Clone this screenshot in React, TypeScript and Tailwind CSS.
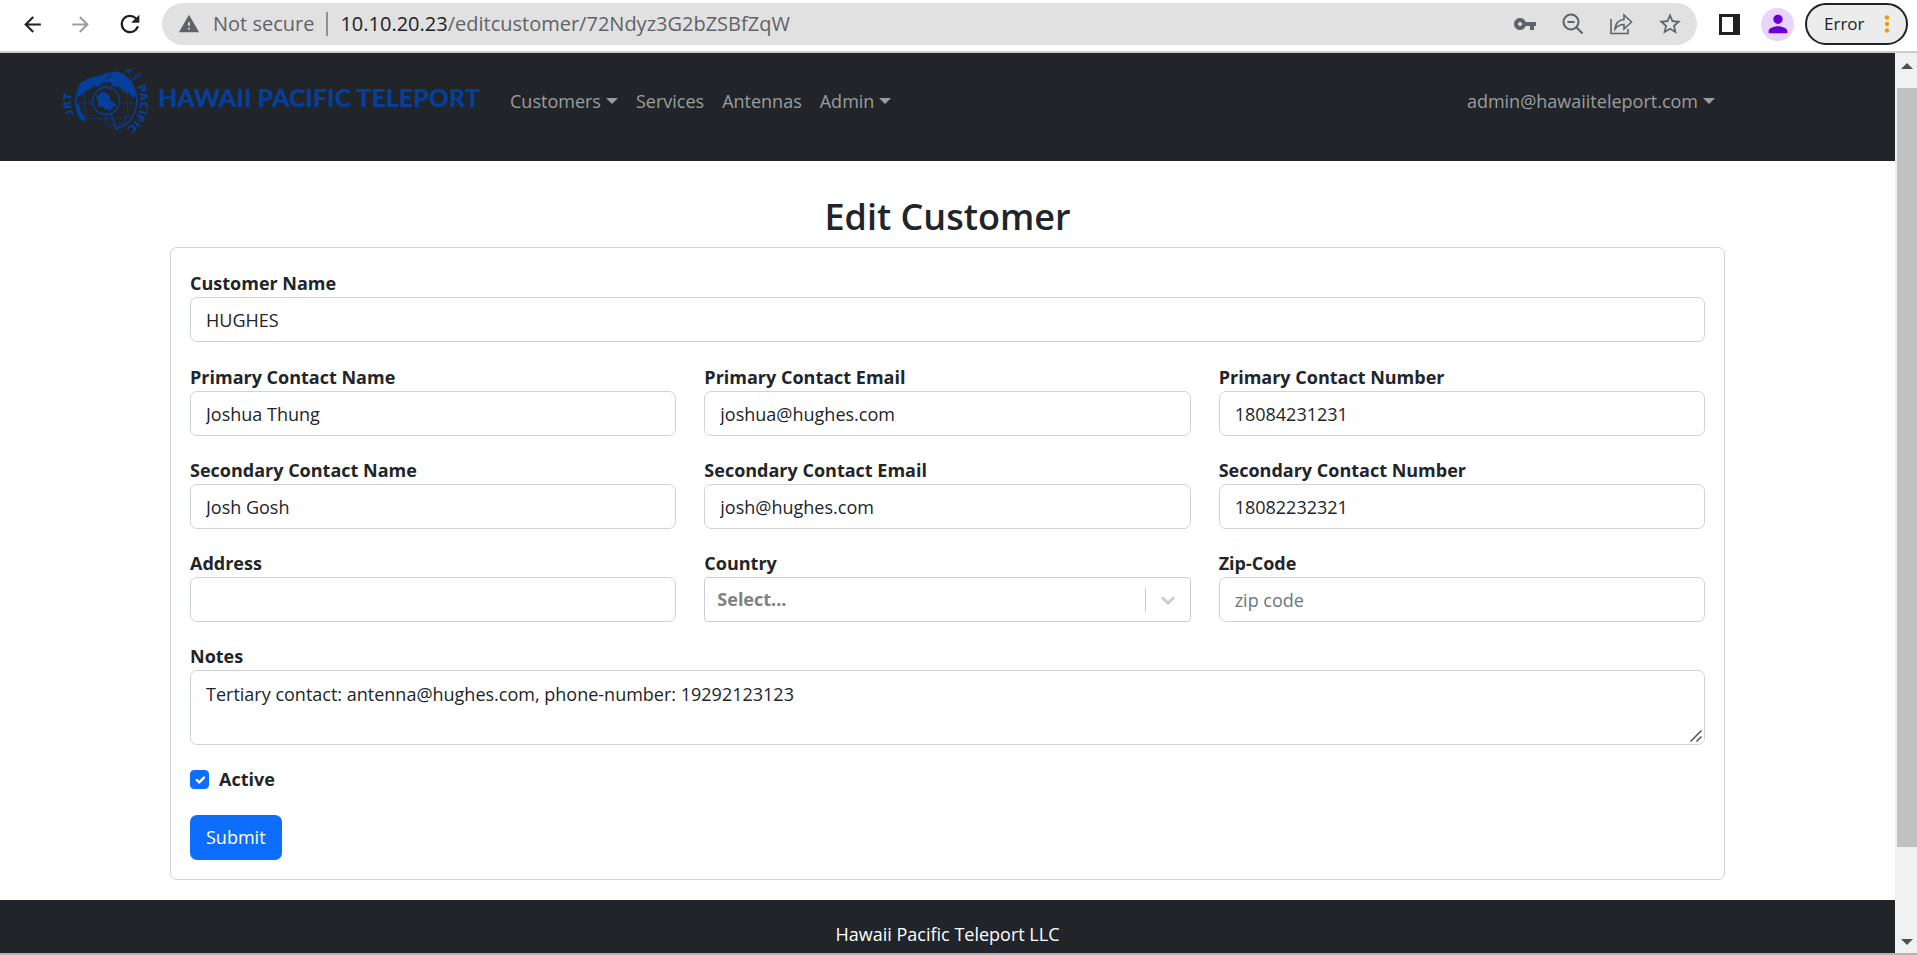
import { MdArrowBack, MdArrowForward, MdRefresh, MdWarning, MdVpnKey, MdStarBorder, MdPerson, MdMoreVert } from "react-icons/md";
import type { ReactNode } from "react";

const control =
  "h-[45px] w-full rounded-[7px] border border-[#ced4da] bg-white px-[15px] text-[18px] leading-[27px] text-[#212529] placeholder:text-[#6c757d] focus:outline-2 focus:outline-[#86b7fe]";

function Globe() {
  return (
    <svg viewBox="0 0 94 76" className="h-[76px] w-[94px] shrink-0 text-[#063f9b]" fill="none" stroke="currentColor" aria-hidden="true">
      <defs>
        <path id="ring" d="M46 73.5a34.5 34.5 0 0 1 0-69a34.5 34.5 0 0 1 0 69" />
        <clipPath id="ring-clip">
          <path d="M0 27h20v25H0zM62 5h32v67H62z" />
        </clipPath>
        <clipPath id="sphere">
          <path d="M22 20L42 14Q52 8 63 13C75 20 80 36 75 50Q70 63 56 67L22 58C14 48 14 32 22 20Z" />
        </clipPath>
      </defs>
      <path d="M42 14Q52 8 63 13C75 20 80 36 75 50Q70 63 56 67M22 58C14 48 14 32 22 20" strokeWidth="1.4" />
      <g clipPath="url(#sphere)" strokeWidth=".6">
        <path d="M14 41h64M15 53q31 8 60 0M16 28q30-8 60 0M22 61q26 8 44-2M32 14c-10 14-10 34-2 50M46 10v58M60 12c10 16 10 36 2 54" />
      </g>
      <g fill="currentColor" stroke="none">
        <path d="M22 20l8-4 12-3 6-2 2 3-4 2 1 4-5 1-4 3-5-1-2 4-4 1-4 4-6 3 1-8zM47 17l4-3-1-3 6-2 7 3 7 6 4 8 2 8-3 2-4-5-5-1-4-5-7-1-3-4-4 1zM16 41l3 2 2 7 4 5 0 5-4-3-4-7z" />
      </g>
      <circle cx="46" cy="39" r="13.5" fill="#212529" strokeWidth="1.3" />
      <path d="M36 34l3-1 2-3 4 0 3 3 2 1 0 4 3 2 4 4-4 1-3 4-5-2-4-3-3 1 0-6z" fill="currentColor" stroke="none" />
      <path d="M51 52l5 15 6-4M70 20l5-4M78 13.500l3-2M65.500 10.500l2-2.500 2 .500M68.500 11l3-4" strokeWidth="1.3" />
      <circle cx="76.500" cy="14.500" r="1.800" strokeWidth="1" />
      <g clipPath="url(#ring-clip)" fill="currentColor" stroke="none" className="font-['DejaVu_Sans',sans-serif] text-[11px] font-bold">
        <text>
          <textPath href="#ring" startOffset="37">ORT</textPath>
        </text>
        <text>
          <textPath href="#ring" startOffset="147">PACIFIC</textPath>
        </text>
      </g>
    </svg>
  );
}

function Caret() {
  return <span className="ml-[5px] inline-block border-x-[6px] border-t-[6px] border-x-transparent border-t-current align-[4px]" />;
}

function NavLink({ children, caret }: { children: ReactNode; caret?: boolean }) {
  return (
    <a href="#" className="hover:text-white">
      {children}
      {caret && <Caret />}
    </a>
  );
}

function Field({ id, label, children }: { id: string; label: string; children: ReactNode }) {
  return (
    <div className="flex min-w-0 flex-col">
      <label htmlFor={id} className="text-[18px] leading-[27px] font-bold">
        {label}
      </label>
      {children}
    </div>
  );
}

function TextField({ id, label, value, placeholder }: { id: string; label: string; value?: string; placeholder?: string }) {
  return (
    <Field id={id} label={label}>
      <input id={id} type="text" defaultValue={value} placeholder={placeholder} className={control} />
    </Field>
  );
}

function BrowserBar() {
  return (
    <header className="flex items-center border-b-2 border-[#cbcccd] bg-white pt-[3px] pr-[9px] pb-1.5 pl-5">
      <div className="flex shrink-0 items-center gap-[23px] pr-[18px] text-[#202124]">
        <button type="button" aria-label="Back"><MdArrowBack size={25} /></button>
        <button type="button" aria-label="Forward" className="text-[#9c9d9f]"><MdArrowForward size={25} /></button>
        <button type="button" aria-label="Reload"><MdRefresh size={28} /></button>
      </div>
      <div className="flex h-[42px] min-w-0 flex-1 items-center rounded-full bg-[#e1e1e1] pr-3.5 pl-4 text-[20px] text-[#5f6368]">
        <MdWarning size={22} className="shrink-0" />
        <span className="ml-[13px] shrink-0">Not secure</span>
        <span className="mx-3 h-6 w-0.5 shrink-0 bg-[#8f9194]" />
        <span className="min-w-0 flex-1 truncate">
          <span className="text-[#202124]">10.10.20.23</span>/editcustomer/72Ndyz3G2bZSBfZqW
        </span>
        <div className="flex shrink-0 items-center gap-6">
          <button type="button" aria-label="Passwords"><MdVpnKey size={24} /></button>
          <button type="button" aria-label="Zoom">
            <svg viewBox="0 0 24 24" className="size-6" fill="none" stroke="currentColor" strokeWidth="2">
              <circle cx="10" cy="10" r="7.5" />
              <path d="M15.5 15.5l6 6M6.5 10h7" />
            </svg>
          </button>
          <button type="button" aria-label="Share">
            <svg viewBox="0 0 24 24" className="size-6" fill="none" stroke="currentColor" strokeWidth="1.6">
              <path d="M2 7v14.5h17V17M6 17c.5-6 4-9 9-9.500V3l7.500 7-7.500 7v-4.500c-4 0-6.500 1-9 4.500z" />
            </svg>
          </button>
          <button type="button" aria-label="Bookmark"><MdStarBorder size={26} /></button>
        </div>
      </div>
      <button type="button" aria-label="Side panel" className="ml-[22px] h-[21px] w-[21px] shrink-0 border-[3px] border-r-[7px] border-[#202124] bg-white" />
      <button type="button" aria-label="Profile" className="ml-[21px] flex size-[33px] shrink-0 items-center justify-center rounded-full bg-[#e8d4fd] text-[#6a00d6]">
        <MdPerson size={28} />
      </button>
      <button type="button" className="ml-[11px] flex h-[42px] w-[103px] shrink-0 items-center justify-between rounded-full border-2 border-[#202124] bg-[#ececec] pr-1.5 pl-[17px] text-[17px] text-[#202124]">
        Error
        <MdMoreVert size={26} className="text-[#f29900]" />
      </button>
    </header>
  );
}

function NavBar() {
  return (
    <nav className="flex h-[108px] items-start bg-[#212529] pr-[180px] pl-[60px] text-[#9b9d9f]">
      <a href="#" className="flex items-start pt-[9px] font-[Lato] text-[25px] leading-[70px] font-black whitespace-nowrap text-[#063f9b]">
        <Globe />
        <span className="ml-1">HAWAII PACIFIC TELEPORT</span>
      </a>
      <div className="ml-[30px] flex flex-1 justify-between pt-[35px] text-[18px] leading-[27px] whitespace-nowrap">
        <div className="flex gap-[18px]">
          <NavLink caret>Customers</NavLink>
          <NavLink>Services</NavLink>
          <NavLink>Antennas</NavLink>
          <NavLink caret>Admin</NavLink>
        </div>
        <NavLink caret>admin@hawaiiteleport.com</NavLink>
      </div>
    </nav>
  );
}

function ScrollRail() {
  return (
    <div className="flex w-[22px] shrink-0 flex-col items-center bg-[#f1f1f1] pt-2.5 pb-2 pl-0.5" aria-hidden="true">
      <span className="border-x-[6px] border-b-[6px] border-x-transparent border-b-[#505050]" />
      <span className="mt-[19px] w-full flex-[759] bg-[#c1c1c1]" />
      <span className="flex-[92]" />
      <span className="border-x-[6px] border-t-[6px] border-x-transparent border-t-[#505050]" />
    </div>
  );
}

export default function App() {
  return (
    <div className="flex min-h-screen flex-col bg-white font-['Open_Sans','Noto_Sans',sans-serif] text-[#212529]">
      <BrowserBar />
      <div className="flex flex-1 border-b-2 border-[#b5b0b2]">
        <div className="flex min-w-0 flex-1 flex-col">
          <NavBar />
          <main className="mx-auto w-full max-w-[1555px] pt-8 pb-5">
            <h1 className="mb-[7px] text-center text-[36px] leading-[47px] font-semibold">Edit Customer</h1>
            <form className="rounded-[7px] border border-[#d0d3d6] px-[19px] pt-[22px] pb-[19px]" onSubmit={(e) => e.preventDefault()}>
              <TextField id="customer" label="Customer Name" value="HUGHES" />
              <div className="mt-[22px] grid grid-cols-3 gap-x-7 gap-y-[21px]">
                <TextField id="primary-name" label="Primary Contact Name" value="Joshua Thung" />
                <TextField id="primary-email" label="Primary Contact Email" value="joshua@hughes.com" />
                <TextField id="primary-number" label="Primary Contact Number" value="18084231231" />
                <TextField id="secondary-name" label="Secondary Contact Name" value="Josh Gosh" />
                <TextField id="secondary-email" label="Secondary Contact Email" value="josh@hughes.com" />
                <TextField id="secondary-number" label="Secondary Contact Number" value="18082232321" />
                <TextField id="address" label="Address" />
                <Field id="country" label="Country">
                  <div className="relative">
                    <select id="country" className="h-[45px] w-full appearance-none rounded-[4px] border border-[#cccccc] bg-white px-3 text-[18px] font-bold text-[#808080]">
                      <option>Select...</option>
                    </select>
                    <div className="pointer-events-none absolute inset-y-0 right-0 flex items-center gap-[11px] pr-3 text-[#cccccc]">
                      <span className="h-6 w-px bg-current" />
                      <svg viewBox="0 0 20 20" className="size-[22px]" fill="currentColor" stroke="currentColor" strokeWidth=".6">
                        <path d="M4.516 7.548c0.436-0.446 1.043-0.481 1.576 0l3.908 3.747 3.908-3.747c0.533-0.481 1.141-0.446 1.574 0 0.436 0.445 0.408 1.197 0 1.615-0.406 0.418-4.695 4.502-4.695 4.502-0.217 0.223-0.502 0.335-0.787 0.335s-0.570-0.112-0.789-0.335c0 0-4.287-4.084-4.695-4.502s-0.436-1.170 0-1.615z" />
                      </svg>
                    </div>
                  </div>
                </Field>
                <TextField id="zip" label="Zip-Code" placeholder="zip code" />
                <div className="col-span-3">
                  <Field id="notes" label="Notes">
                    <div className="relative flex">
                      <textarea
                        id="notes"
                        defaultValue="Tertiary contact: antenna@hughes.com, phone-number: 19292123123"
                        className="h-[75px] w-full resize-none rounded-[7px] border border-[#ced4da] px-[15px] py-2.5 text-[18px] leading-[27px]"
                      />
                      <svg viewBox="0 0 12 12" className="pointer-events-none absolute right-[3px] bottom-[3px] size-3" fill="none" stroke="#505050" strokeWidth="1.5">
                        <path d="M.5 11.500l11-11M6.500 11.500l5-5" />
                      </svg>
                    </div>
                  </Field>
                </div>
              </div>
              <label className="mt-[21px] flex w-fit items-center gap-2.5 text-[18px] leading-[27px] font-bold">
                <span className="grid size-[19px] place-items-center">
                  <input type="checkbox" defaultChecked className="peer col-start-1 row-start-1 size-[19px] appearance-none rounded-[4px] border border-[#ced4da] checked:border-[#0d6efd] checked:bg-[#0d6efd]" />
                  <svg viewBox="0 0 20 20" className="pointer-events-none invisible col-start-1 row-start-1 size-4 peer-checked:visible" fill="none" stroke="white" strokeWidth="3" strokeLinecap="round" strokeLinejoin="round">
                    <path d="M6 10l3 3 6-6" />
                  </svg>
                </span>
                Active
              </label>
              <button type="submit" className="mt-[22px] h-[45px] rounded-[7px] bg-[#0d6efd] px-4 text-[18px] text-white">
                Submit
              </button>
            </form>
          </main>
          <footer className="flex-1 bg-[#212529] pt-[21px] text-center text-[18px] leading-[27px] text-white">Hawaii Pacific Teleport LLC</footer>
        </div>
        <ScrollRail />
      </div>
    </div>
  );
}
